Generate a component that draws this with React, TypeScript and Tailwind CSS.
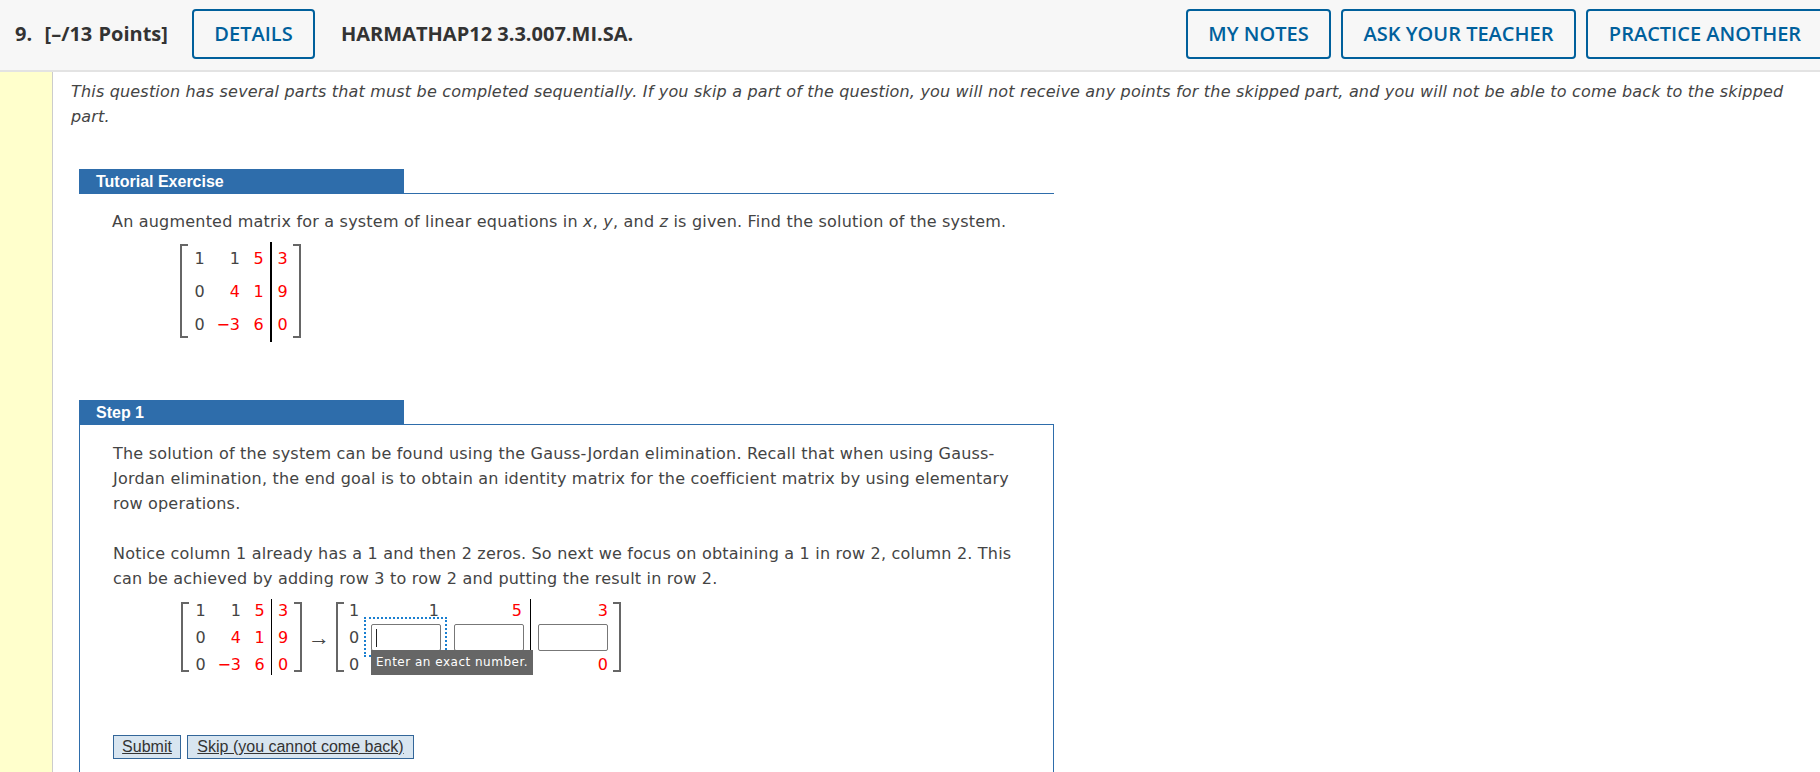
import React from "react";

const btn =
  "h-[50px] flex items-center justify-center shrink-0 rounded-[4px] border-2 border-[#00609c] text-[#00609c] text-[20px] font-semibold";

function Bracket({ side, className }: { side: "l" | "r"; className: string }) {
  return (
    <div
      className={`w-[8px] shrink-0 border-y-2 border-[#666] ${
        side === "l" ? "border-l-2" : "border-r-2"
      } ${className}`}
    />
  );
}

function Cell({ v, red, className }: { v: string; red?: boolean; className: string }) {
  return (
    <div className={`flex items-center shrink-0 ${red ? "text-[#ff0000]" : "text-[#444]"} ${className}`}>{v}</div>
  );
}

function FirstMatrixCols({ h, line, inner }: { h: string; line: string; inner: string }) {
  return (
    <>
      <div className={`w-[23px] flex flex-col ${inner}`}>
        <Cell v="1" className={`${h} justify-center`} />
        <Cell v="0" className={`${h} justify-center`} />
        <Cell v="0" className={`${h} justify-center`} />
      </div>
      <div className={`w-[36px] flex flex-col pr-[7px] ${inner}`}>
        <Cell v="1" className={`${h} justify-end`} />
        <Cell v="4" red className={`${h} justify-end`} />
        <Cell v="−3" red className={`${h} justify-end`} />
      </div>
      <div className={`w-[23px] flex flex-col ${inner}`}>
        <Cell v="5" red className={`${h} justify-center`} />
        <Cell v="1" red className={`${h} justify-center`} />
        <Cell v="6" red className={`${h} justify-center`} />
      </div>
      <div className={`w-[23px] border-black ${line}`}>
        <div className={`flex flex-col ${inner}`}>
          <Cell v="3" red className={`${h} justify-center`} />
          <Cell v="9" red className={`${h} justify-center`} />
          <Cell v="0" red className={`${h} justify-center`} />
        </div>
      </div>
    </>
  );
}

function Box({ caret }: { caret?: boolean }) {
  return (
    <div className="w-[70px] h-[27px] shrink-0 rounded-[2px] border border-[#777] bg-white flex items-center pl-[4px]">
      {caret && <div className="w-[1px] h-[18px] bg-[#222]" />}
    </div>
  );
}

export default function App() {
  return (
    <div className="relative w-[1820px] h-[772px] overflow-hidden bg-white font-['DejaVu_Sans',sans-serif] text-[16px] text-[#444]">
      <header className="h-[72px] pb-[2px] flex items-center bg-[#f7f7f7] border-b-2 border-[#e3e3e3] pl-[15px] font-['Open_Sans',sans-serif] text-[#333]">
        <div className="w-[177px] shrink-0 text-[20px] font-bold whitespace-pre [word-spacing:1px]">9.  [–/13 Points]</div>
        <div className={`${btn} w-[123px]`}>DETAILS</div>
        <div className="ml-[26px] text-[20px] font-bold whitespace-nowrap">HARMATHAP12 3.3.007.MI.SA.</div>
        <div className="ml-auto flex gap-[10px] -mr-[4px]">
          <div className={`${btn} w-[145px]`}>MY NOTES</div>
          <div className={`${btn} w-[235px]`}>ASK YOUR TEACHER</div>
          <div className={`${btn} w-[238px]`}>PRACTICE ANOTHER</div>
        </div>
      </header>

      <div className="flex h-[700px]">
        <div className="w-[53px] shrink-0 bg-[#ffffcc] border-r border-[#cccccc]" />
        <main className="flex-1 pl-[18px]">
          <p className="italic tracking-[0.18px] leading-[25px] pt-[7px] w-[1730px]">
            This question has several parts that must be completed sequentially. If you skip a part of the question, you will not receive any points for the skipped part, and you will not be able to come back to the skipped part.
          </p>

          <section className="ml-[8px] w-[975px] mt-[40px]">
            <div className="border-b border-[#2e6dab]">
              <div className="w-[325px] h-[25px] -mb-px bg-[#2e6dab] text-white font-['Liberation_Sans',sans-serif] font-bold text-[16px] leading-[25px] pl-[17px]">
                Tutorial Exercise
              </div>
            </div>
            <p className="ml-[33px] mt-[15px] leading-[25px] tracking-[0.2px]">
              An augmented matrix for a system of linear equations in <i>x</i>, <i>y</i>, and <i>z</i> is given. Find the solution of the system.
            </p>
            <div className="flex ml-[101px] mt-[8px] h-[100px] w-fit">
              <Bracket side="l" className="mt-[2px] mb-[4px]" />
              <FirstMatrixCols h="h-[33.3px]" line="border-l-2" inner="" />
              <Bracket side="r" className="mt-[2px] mb-[4px]" />
            </div>
          </section>

          <section className="ml-[8px] w-[975px] mt-[58px] h-[400px]">
            <div className="w-[325px] h-[25px] -mb-px bg-[#2e6dab] text-white font-['Liberation_Sans',sans-serif] font-bold text-[16px] leading-[25px] pl-[17px]">
              Step 1
            </div>
            <div className="border border-[#2e6dab] h-[400px] pl-[33px] pr-[30px] pt-[16px]">
              <p className="leading-[25px] tracking-[0.2px]">
                The solution of the system can be found using the Gauss-Jordan elimination. Recall that when using Gauss-Jordan elimination, the end goal is to obtain an identity matrix for the coefficient matrix by using elementary row operations.
              </p>
              <p className="leading-[25px] mt-[25px] tracking-[0.2px]">
                Notice column 1 already has a 1 and then 2 zeros. So next we focus on obtaining a 1 in row 2, column 2. This can be achieved by adding row 3 to row 2 and putting the result in row 2.
              </p>
              <div className="flex items-stretch ml-[68px] mt-[8px] h-[76px] w-fit">
                <Bracket side="l" className="my-[3px]" />
                <FirstMatrixCols h="h-[27px]" line="border-l" inner="-mt-[2px]" />
                <Bracket side="r" className="my-[3px]" />
                <div className="w-[34px] flex items-center justify-center text-[22px] font-['Liberation_Sans',sans-serif]">→</div>
                <Bracket side="l" className="my-[3px]" />
                <div className="w-[20px] flex flex-col -mt-[2px]">
                  <Cell v="1" className="h-[27px] justify-center" />
                  <Cell v="0" className="h-[27px] justify-center" />
                  <Cell v="0" className="h-[27px] justify-center" />
                </div>
                <div className="relative w-[90px] pl-[7px]">
                  <div className="flex flex-col -mt-[2px]">
                    <Cell v="1" className="h-[27px] justify-end pr-[2px] w-[70px]" />
                    <Box caret />
                  </div>
                  <div className="absolute left-0 top-[18px] w-[83px] h-[40px] border-2 border-dotted border-[#1a7fd0] pointer-events-none" />
                  <div className="absolute left-[7px] top-[51px] z-10 w-[162px] h-[25px] bg-[#666] text-white text-[12px] tracking-[0.5px] leading-[25px] text-center whitespace-nowrap">
                    Enter an exact number.
                  </div>
                </div>
                <div className="w-[76px]">
                  <div className="flex flex-col -mt-[2px]">
                    <Cell v="5" red className="h-[27px] justify-end pr-[2px] w-[70px]" />
                    <Box />
                  </div>
                </div>
                <div className="w-[83px] border-l border-black pl-[7px]">
                  <div className="flex flex-col -mt-[2px]">
                    <Cell v="3" red className="h-[27px] justify-end w-[70px]" />
                    <Box />
                    <Cell v="0" red className="h-[27px] justify-end w-[70px]" />
                  </div>
                </div>
                <Bracket side="r" className="my-[3px]" />
              </div>
              <div className="flex gap-[6px] mt-[60px] font-['Liberation_Sans',sans-serif] text-[16px] text-[#333]">
                <div className="h-[24px] w-[68px] flex items-center justify-center border border-[#336699] bg-[#d8e5f0] underline">Submit</div>
                <div className="h-[24px] w-[227px] flex items-center justify-center border border-[#336699] bg-[#d8e5f0] underline">Skip (you cannot come back)</div>
              </div>
            </div>
          </section>
        </main>
      </div>
    </div>
  );
}
